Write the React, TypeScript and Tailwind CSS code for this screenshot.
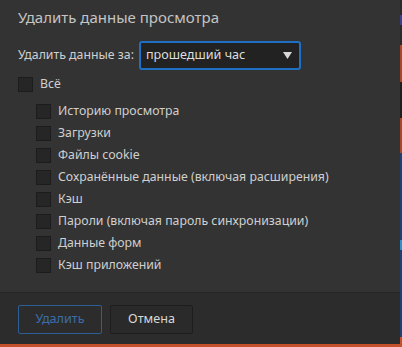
import { useState } from 'react';

const items = [
  'Историю просмотра',
  'Загрузки',
  'Файлы cookie',
  'Сохранённые данные (включая расширения)',
  'Кэш',
  'Пароли (включая пароль синхронизации)',
  'Данные форм',
  'Кэш приложений',
];

function Box({ checked, onChange }: { checked: boolean; onChange: () => void }) {
  return (
    <button
      type="button"
      onClick={onChange}
      className="flex h-[15px] w-[15px] shrink-0 items-center justify-center border border-[#1c1c1c] bg-[#262626] text-[11px] leading-none text-[#ddd]"
    >
      {checked ? '✓' : ''}
    </button>
  );
}

export default function App() {
  const [all, setAll] = useState(false);
  const [checked, setChecked] = useState<boolean[]>(items.map(() => false));

  return (
    <div className="flex h-[347px] w-[402px] font-['Noto_Sans',sans-serif] text-[12.3px]">
      <div className="flex w-[400px] flex-col">
        {/* основная часть */}
        <div className="flex h-[292px] flex-col bg-[#333333] pl-[18px]">
          <h1 className="pt-[7px] text-[15px] leading-[20px] text-[#c4c4c4]">Удалить данные просмотра</h1>

          <div className="mt-[14px] flex items-center gap-[5px]">
            <span className="text-[#cfcfcf]">Удалить данные за:</span>
            <div className="flex h-[29px] w-[162px] items-center justify-between rounded-[3px] border-2 border-[#1f6fc2] bg-[#222222] pl-[5px] pr-[7px]">
              <span className="text-[12.6px] text-[#dedede]">прошедший час</span>
              <svg width="9" height="7" viewBox="0 0 9 7">
                <path d="M0 0H9L4.5 7Z" fill="#d8d8d8" />
              </svg>
            </div>
          </div>

          <label className="mt-[7px] flex h-[15px] items-center gap-[7px] text-[#cfcfcf]">
            <Box checked={all} onChange={() => setAll(!all)} />
            <span>Всё</span>
          </label>

          <div className="mt-[12px] flex flex-col gap-[7px] pl-[18px]">
            {items.map((item, i) => (
              <label key={item} className="flex h-[15px] items-center gap-[7px] text-[#cfcfcf]">
                <Box
                  checked={checked[i]}
                  onChange={() => setChecked(checked.map((c, j) => (j === i ? !c : c)))}
                />
                <span className="whitespace-nowrap">{item}</span>
              </label>
            ))}
          </div>
        </div>

        {/* кнопки */}
        <div className="flex h-[52px] items-start gap-[8px] border-t border-[#262626] bg-[#2c2c2c] pl-[18px] pt-[12px]">
          <button
            type="button"
            disabled
            className="h-[29px] w-[84px] rounded-[2px] border border-[#2d5f97] text-[12.6px] text-[#3b6ea8]"
          >
            Удалить
          </button>
          <button
            type="button"
            className="h-[29px] w-[83px] rounded-[2px] border border-[#1d1d1d] bg-[#2a2a2a] text-[12.6px] text-[#d8d8d8]"
          >
            Отмена
          </button>
        </div>
        <div className="h-[3px] bg-[#c4512a]" />
      </div>

      {/* полоса справа */}
      <div className="flex w-[2px] flex-col">
        <div className="h-[15px] bg-[#2a2a2a]" />
        <div className="h-[10px] bg-[#3a3f8a]" />
        <div className="h-[20px] bg-[#2a2a2a]" />
        <div className="h-[37px] bg-[#a8482a]" />
        <div className="h-[36px] bg-[#1e1e1e]" />
        <div className="h-[35px] bg-[#a8482a]" />
        <div className="h-[87px] bg-[#1f3f74]" />
        <div className="h-[10px] bg-[#2e8fd0]" />
        <div className="h-[87px] bg-[#1f3f74]" />
        <div className="flex-1 bg-[#c4512a]" />
      </div>
    </div>
  );
}
